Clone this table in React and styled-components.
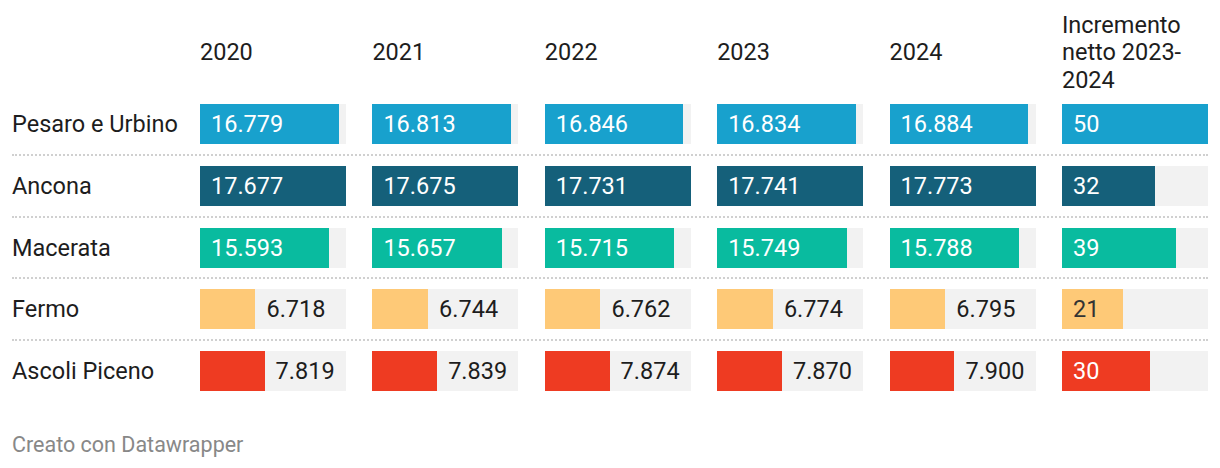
import React from "react";
import styled, { createGlobalStyle } from "styled-components";

const GlobalStyle = createGlobalStyle`
  html, body {
    margin: 0;
    padding: 0;
    background: #ffffff;
  }
  body {
    font-family: Roboto, "Liberation Sans", Arial, sans-serif;
    color: #1d1d1d;
  }
`;

const BAR_W = 146;
const COLS = `161.6px repeat(6, ${BAR_W}px)`;

const Page = styled.div`
  width: 1220px;
  box-sizing: border-box;
  padding: 9px 12px 0 12px;
`;

const Header = styled.div`
  display: grid;
  grid-template-columns: ${COLS};
  column-gap: 26.4px;
`;

const HeadCell = styled.div`
  display: flex;
  flex-direction: column;
  justify-content: flex-end;
  font-size: 23.5px;
  line-height: 27.5px;
  color: #1d1d1d;
  height: 85px;
  white-space: pre-line;
  padding-bottom: ${(p) => (p.$raised ? "27.5px" : "0")};
  box-sizing: border-box;
`;

const Row = styled.div`
  display: grid;
  grid-template-columns: ${COLS};
  column-gap: 26.4px;
  align-items: center;
  padding: 10px 0 9.8px 0;
  border-bottom: ${(p) => (p.$last ? "2px solid transparent" : "2px dotted #d0d0d0")};
`;

const Label = styled.div`
  font-size: 23.5px;
  color: #1d1d1d;
  white-space: nowrap;
`;

const Track = styled.div`
  position: relative;
  width: ${BAR_W}px;
  height: 40px;
  background: #f2f2f2;
  display: flex;
  align-items: center;
`;

const Fill = styled.div`
  height: 40px;
  background: ${(p) => p.$color};
  flex: none;
`;

const Value = styled.span`
  position: absolute;
  top: 0;
  bottom: 0;
  display: flex;
  align-items: center;
  font-size: 23.5px;
  color: ${(p) => p.$color};
  white-space: nowrap;
`;

const Footer = styled.div`
  margin-top: 29px;
  font-size: 21.5px;
  color: #888888;
`;

const years = ["2020", "2021", "2022", "2023", "2024"];

const rows = [
  { name: "Pesaro e Urbino", color: "#18a1cd", text: "#ffffff", values: [16779, 16813, 16846, 16834, 16884], inc: 50 },
  { name: "Ancona", color: "#15607a", text: "#ffffff", values: [17677, 17675, 17731, 17741, 17773], inc: 32 },
  { name: "Macerata", color: "#09bb9f", text: "#ffffff", values: [15593, 15657, 15715, 15749, 15788], inc: 39 },
  { name: "Fermo", color: "#fec977", text: "#333333", values: [6718, 6744, 6762, 6774, 6795], inc: 21 },
  { name: "Ascoli Piceno", color: "#ee3b22", text: "#ffffff", values: [7819, 7839, 7874, 7870, 7900], inc: 30 },
];

const fmt = (n) => {
  const s = String(n);
  return s.length > 3 ? s.slice(0, -3) + "." + s.slice(-3) : s;
};

const maxOf = (i) => Math.max(...rows.map((r) => r.values[i]));
const maxInc = Math.max(...rows.map((r) => r.inc));

const Bar = ({ value, max, color, textColor }) => {
  const w = (value / max) * BAR_W;
  const label = fmt(value);
  const inside = w > label.length * 12 + 20;
  return (
    <Track>
      <Fill $color={color} style={{ width: w }} />
      <Value
        $color={inside ? textColor : "#1d1d1d"}
        style={{ left: inside ? 11 : w + 11 }}
      >
        {label}
      </Value>
    </Track>
  );
};

const App = () => {
  return (
    <Page>
      <GlobalStyle />
      <Header>
        <HeadCell />
        {years.map((y) => (
          <HeadCell key={y} $raised>
            {y}
          </HeadCell>
        ))}
        <HeadCell>{"Incremento\nnetto 2023-\n2024"}</HeadCell>
      </Header>
      {rows.map((r, ri) => (
        <Row key={r.name} $last={ri === rows.length - 1}>
          <Label>{r.name}</Label>
          {r.values.map((v, i) => (
            <Bar key={i} value={v} max={maxOf(i)} color={r.color} textColor={r.text} />
          ))}
          <Bar value={r.inc} max={maxInc} color={r.color} textColor={r.text} />
        </Row>
      ))}
      <Footer>Creato con Datawrapper</Footer>
    </Page>
  );
};

export default App;
